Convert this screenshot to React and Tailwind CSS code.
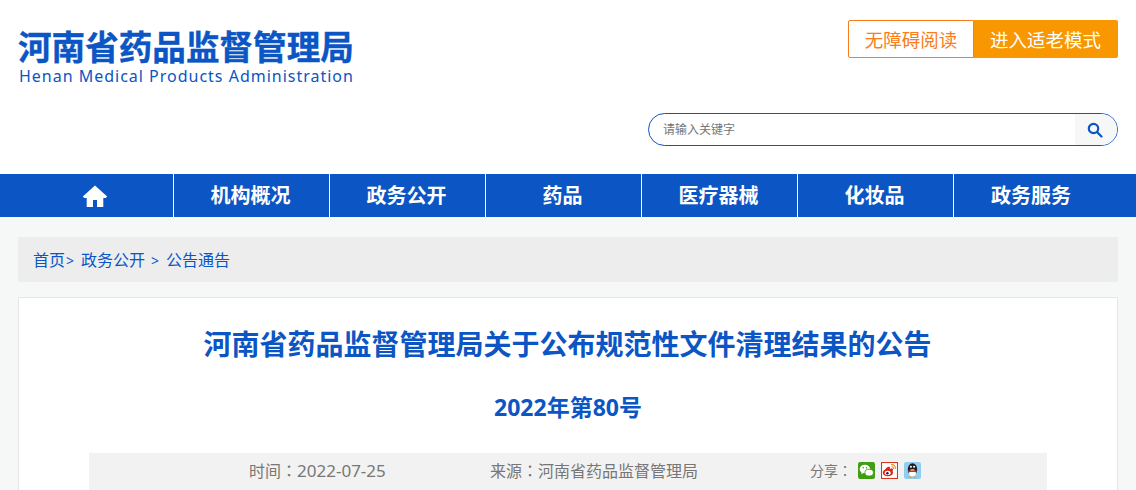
import React from "react";

const font = { fontFamily: '"Noto Sans","Noto Sans CJK SC",sans-serif' };
const navs = ["机构概况", "政务公开", "药品", "医疗器械", "化妆品", "政务服务"];

function Colon() {
  return <span style={{ fontFamily: '"Noto Sans CJK TC",sans-serif' }}>：</span>;
}

function Wechat() {
  return (
    <svg width="17" height="17" viewBox="0 0 16 16">
      <rect width="16" height="16" rx="2" fill="#3f9e12" />
      <ellipse cx="6.5" cy="6.5" rx="5" ry="4" fill="#fff" />
      <path d="M3.5 9l-.5 2.5 2.5-1.5z" fill="#fff" />
      <ellipse cx="10.5" cy="10" rx="4" ry="3.2" fill="#fff" stroke="#3f9e12" strokeWidth=".8" />
      <circle cx="5" cy="5.5" r=".7" fill="#3f9e12" />
      <circle cx="8" cy="5.5" r=".7" fill="#3f9e12" />
    </svg>
  );
}
function Weibo() {
  return (
    <svg width="17" height="17" viewBox="0 0 16 16">
      <rect x=".5" y=".5" width="15" height="15" fill="#fff" stroke="#d8361f" />
      <ellipse cx="6.5" cy="10" rx="4.8" ry="3.4" fill="#d8261f" />
      <path d="M3 8.5c1-2.5 3.5-4.5 5-4 1 .4.3 2 .3 2s2.700-1 3 .5c.1 1-.6 1.500-.6 2z" fill="#d8261f" />
      <ellipse cx="6.300" cy="10.300" rx="2.800" ry="2" fill="#fff" />
      <circle cx="6" cy="10.500" r="1.200" fill="#222" />
      <path d="M9.500 2.500c2.500-.4 4.500 1.500 4 4M9.800 4.500c1.300-.2 2.200.8 2 2" fill="none" stroke="#f08a1d" strokeWidth="1.100" />
    </svg>
  );
}
function QQ() {
  return (
    <svg width="17" height="17" viewBox="0 0 16 16">
      <rect width="16" height="16" rx="2" fill="#8fcdf2" />
      <ellipse cx="8" cy="7" rx="4.400" ry="5.800" fill="#1d1d1f" />
      <ellipse cx="8" cy="10.500" rx="3.200" ry="3" fill="#fff" />
      <circle cx="6.500" cy="4.500" r="1" fill="#fff" />
      <circle cx="9.500" cy="4.500" r="1" fill="#fff" />
      <path d="M5.500 6.600h5L8 8z" fill="#f5a31a" />
      <path d="M3.800 8h8.400l-.6 1.500H4.400z" fill="#d8261f" />
      <path d="M3.500 15l3-2 .8 2zM12.500 15l-3-2-.8 2z" fill="#f5a31a" />
    </svg>
  );
}

export default function App() {
  return (
    <div className="h-[490px] overflow-hidden bg-[#f6f8f8]" style={font}>
      <header className="h-[174px] bg-white">
        <div className="flex justify-between px-[18px]">
          <div className="pt-[28px]">
            <div className="text-[33.600px] leading-[38px] font-bold text-[#0b55c4] whitespace-nowrap [-webkit-text-stroke:0.4px_#0b55c4]">河南省药品监督管理局</div>
            <div className="pl-[1px] text-[16px] leading-[20px] tracking-[0.990px] text-[#0b55c4] whitespace-nowrap">Henan Medical Products Administration</div>
          </div>
          <div className="flex flex-col items-end pt-[20px]">
            <div className="flex h-[38px] w-[270px] text-[18.500px]">
              <div className="flex w-[126px] items-center justify-center rounded-l-[2px] border border-[#f97d1c] bg-white pt-[1px] text-[#f97d1c]">无障碍阅读</div>
              <div className="flex w-[144px] items-center justify-center rounded-r-[2px] bg-[#f99700] pt-[1px] pr-[1px] text-white">进入适老模式</div>
            </div>
            <div className="mt-[55px] flex h-[33px] w-[470px] items-center justify-between overflow-hidden rounded-full border border-[#0b55c4] bg-white">
              <span className="pl-[14px] text-[12px] text-[#757575]">请输入关键字</span>
              <span className="flex h-full w-[42px] items-center justify-center bg-[#f7f7f7] pr-[2px]">
                <svg width="16" height="16" viewBox="0 0 16 16" fill="none" stroke="#0b55c4" strokeWidth="2.200" strokeLinecap="round">
                  <circle cx="6.500" cy="6.500" r="4.700" />
                  <path d="M10.200 10.200l4.300 4.300" />
                </svg>
              </span>
            </div>
          </div>
        </div>
      </header>

      <nav className="h-[43px] bg-[#0b55c4] pl-[18px]">
        <ul className="flex h-full text-[20px] font-bold text-white">
          <li className="flex h-full w-[156px] items-center justify-center border-r border-white pr-[2px]">
            <svg width="26" height="24" viewBox="0 0 26 24" fill="#fff">
              <path d="M13 1.500L.8 12.600l1.500 1.400H4.700v9h6.300v-7h4v7h6.300v-9h2.400l1.500-1.400z" />
            </svg>
          </li>
          {navs.map((n, i) => (
            <li key={n} className={`flex h-full w-[156px] items-center justify-center pr-[2px] ${i < 5 ? "border-r border-white" : ""}`}>{n}</li>
          ))}
        </ul>
      </nav>

      <main className="px-[18px] pt-[20px]">
        <div className="flex h-[45px] items-center bg-[#ededed] pl-[15px] pt-[1px] text-[16px] text-[#0b55c4] whitespace-pre">
          <span>首页</span><span className="ml-[1px] text-[14px]">{">"}</span><span className="ml-[7px]">政务公开</span><span className="ml-[6px] text-[14px]">{">"}</span><span className="ml-[7px]">公告通告</span>
        </div>

        <section className="mt-[15px] border border-[#e5e7e7] bg-white px-[70px]">
          <h1 className="pt-[26px] pr-[1px] text-center text-[28px] leading-[40px] font-bold text-[#0b55c4]">河南省药品监督管理局关于公布规范性文件清理结果的公告</h1>
          <h2 className="mt-[28px] text-center text-[23px] leading-[30px] font-bold text-[#0b55c4]">2022年第80号</h2>
          <div className="mt-[31px] flex h-[37px] items-center bg-[#f2f2f2] pb-[2px] text-[16px] text-[#777777]">
            <span className="ml-[160px] w-[241px]">时间<Colon /><span className="text-[17px]">2022-07-25</span></span>
            <span className="w-[320px]">来源<Colon />河南省药品监督管理局</span>
            <span className="text-[14px]">分享<Colon /></span>
            <span className="ml-[6px] flex gap-[6px]"><Wechat /><Weibo /><QQ /></span>
          </div>
        </section>
      </main>
    </div>
  );
}
